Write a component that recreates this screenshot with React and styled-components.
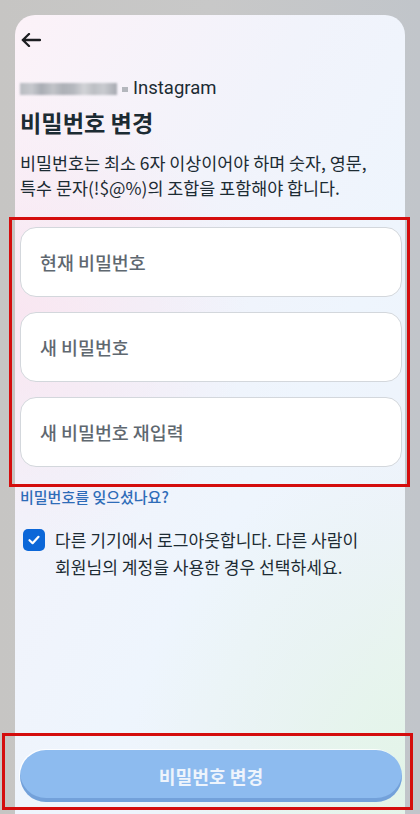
import React from 'react';
import styled, { createGlobalStyle } from 'styled-components';

const GlobalStyle = createGlobalStyle`
  * { box-sizing: border-box; }
  body {
    margin: 0;
    background: #c5c5c5;
    font-family: "Noto Sans CJK KR", "Noto Sans", sans-serif;
  }
`;

const fields = ['현재 비밀번호', '새 비밀번호', '새 비밀번호 재입력'];

const App = () => {
  return (
    <Frame>
      <GlobalStyle />
      <Card>
        <Header>
          <BackButton aria-label="뒤로">
            <svg width="20" height="14" viewBox="0 0 20 14" fill="none">
              <path d="M19 7H1.8M8 1L1.8 7L8 13" stroke="#1c1e21" strokeWidth="2.3" strokeLinecap="round" strokeLinejoin="round" />
            </svg>
          </BackButton>
        </Header>

        <Account>
          <Blurred />
          <Dot />
          <span>Instagram</span>
        </Account>
        <Title>비밀번호 변경</Title>
        <Description>
          비밀번호는 최소 6자 이상이어야 하며 숫자, 영문,
          <br />
          특수 문자(!$@%)의 조합을 포함해야 합니다.
        </Description>

        <Fields>
          {fields.map((f) => (
            <Field key={f}>
              <Input type="password" placeholder={f} />
            </Field>
          ))}
        </Fields>

        <ForgotLink href="#">비밀번호를 잊으셨나요?</ForgotLink>

        <CheckRow>
          <CheckBox>
            <svg width="14" height="14" viewBox="0 0 14 14" fill="none">
              <path d="M2.5 7.2L5.6 10.2L11.5 3.8" stroke="#fff" strokeWidth="2.2" strokeLinecap="round" strokeLinejoin="round" />
            </svg>
          </CheckBox>
          <CheckText>
            다른 기기에서 로그아웃합니다. 다른 사람이
            <br />
            회원님의 계정을 사용한 경우 선택하세요.
          </CheckText>
        </CheckRow>

        <Spacer />

        <Footer>
          <SubmitButton disabled>비밀번호 변경</SubmitButton>
        </Footer>
      </Card>

      <Highlight $left={9} $top={217} $width={401} $height={270} />
      <Highlight $left={2} $top={733} $width={411} $height={77} />
    </Frame>
  );
};

const Frame = styled.div`
  position: relative;
  width: 420px;
  height: 814px;
  padding: 15px 15px 0 15px;
  background: linear-gradient(90deg, #c6c5c3 0%, #c8c8c8 50%, #c1c5ca 100%);
  overflow: hidden;
`;

const Card = styled.div`
  display: flex;
  flex-direction: column;
  height: 100%;
  padding: 0 3px 0 5px;
  border-radius: 20px 20px 0 0;
  background:
    radial-gradient(ellipse 60% 30% at 0% 38%, rgba(250, 226, 238, 0.75), transparent),
    radial-gradient(ellipse 70% 40% at 100% 95%, rgba(226, 244, 232, 0.9), transparent),
    linear-gradient(120deg, #fcf2f8 0%, #f1f3fb 35%, #eef5fd 60%, #eef3fb 80%, #eef6f1 100%);
  color: #1c2b33;
`;

const Header = styled.div`
  display: flex;
  align-items: center;
  padding-top: 18px;
  height: 32px;
`;

const BackButton = styled.div`
  display: flex;
  align-items: center;
  height: 14px;
  padding-left: 1px;
`;

const Account = styled.div`
  display: flex;
  align-items: center;
  margin-top: 30px;
  height: 22px;
  font-size: 18.5px;
  line-height: 22px;
  color: #1c2b33;
  font-family: Roboto, "Noto Sans CJK KR", sans-serif;
`;

const Blurred = styled.span`
  display: inline-block;
  width: 97px;
  height: 12px;
  margin-top: 2px;
  background: linear-gradient(
    90deg,
    #b9bcc2 0%,
    #c7c9ce 12%,
    #a9adb4 22%,
    #c2c4c9 34%,
    #aeb1b7 44%,
    #b5b8be 55%,
    #d2d3d7 66%,
    #bcbfc4 76%,
    #c9cbd0 86%,
    #a7aab1 100%
  );
  filter: blur(0.8px);
`;

const Dot = styled.span`
  display: inline-block;
  width: 6px;
  height: 5px;
  margin: 2px 5px 0 5px;
  background: #b4b7bd;
`;

const Title = styled.h1`
  margin: 7px 0 0;
  font-size: 23.2px;
  line-height: 32px;
  font-weight: 700;
  color: #1c2b33;
`;

const Description = styled.p`
  margin: 13px 0 0;
  font-size: 17.4px;
  line-height: 24.5px;
  color: #1c2b33;
`;

const Fields = styled.div`
  display: flex;
  flex-direction: column;
  gap: 15px;
  margin-top: 27px;
`;

const Field = styled.div`
  height: 70px;
  border: 1px solid #d3d7dc;
  border-radius: 16px;
  background: #ffffff;
  display: flex;
  align-items: center;
  padding: 0 17px;
`;

const Input = styled.input`
  flex: 1;
  border: none;
  outline: none;
  background: transparent;
  font-family: inherit;
  font-size: 18.4px;
  font-weight: 500;
  color: #1c2b33;

  &::placeholder {
    color: #5f6870;
  }
`;

const ForgotLink = styled.a`
  display: block;
  margin-top: 20px;
  font-size: 15px;
  line-height: 20px;
  color: #2e6cb8;
  text-decoration: none;
  font-weight: 500;
`;

const CheckRow = styled.div`
  display: flex;
  align-items: flex-start;
  gap: 10px;
  margin-top: 19px;
  padding-left: 3px;
`;

const CheckBox = styled.div`
  flex: none;
  width: 22px;
  height: 22px;
  margin-top: 3px;
  border-radius: 5px;
  background: #0c67d8;
  display: flex;
  align-items: center;
  justify-content: center;
`;

const CheckText = styled.div`
  font-size: 17.1px;
  line-height: 27px;
  color: #1c2b33;
`;

const Spacer = styled.div`
  flex: 1;
`;

const Footer = styled.div`
  border-top: 1px solid rgba(0, 0, 0, 0.04);
  padding: 16px 3px 12px 5px;
  margin: 0 -3px 0 -5px;
`;

const SubmitButton = styled.button`
  width: 100%;
  height: 52px;
  border: none;
  border-radius: 26px;
  background: #8dbbef;
  box-shadow: inset 0 -4px 0 rgba(70, 115, 180, 0.35), -1px -1px 0 rgba(255, 255, 255, 0.8);
  color: #eef4fc;
  font-family: inherit;
  font-size: 18.2px;
  font-weight: 600;
  padding-bottom: 2px;
`;

const Highlight = styled.div`
  position: absolute;
  left: ${(p) => p.$left}px;
  top: ${(p) => p.$top}px;
  width: ${(p) => p.$width}px;
  height: ${(p) => p.$height}px;
  border: 3px solid #d40d0d;
  pointer-events: none;
`;

export default App;
